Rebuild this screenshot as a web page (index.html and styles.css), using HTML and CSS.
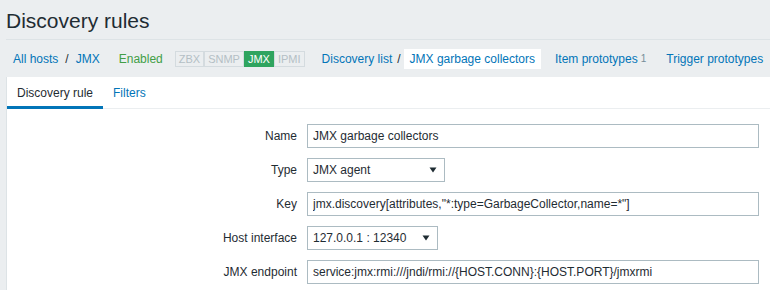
FILE: index.html
```html
<!DOCTYPE html>
<html>
<head>
    <title>Discovery rules</title>
    <link rel="stylesheet" href="styles.css">
</head>
<body>
    <div class="header">
        <h1>Discovery rules</h1>
    </div>
    <!-- host navigation -->
    <ul class="nav">
        <li class="crumbs">
            <a href="#">All hosts</a><span class="sep">/</span><a href="#">JMX</a>
        </li>
        <li class="enabled">Enabled</li>
        <li class="status">
            <span>ZBX</span><span>SNMP</span><span class="on">JMX</span><span>IPMI</span>
        </li>
        <li class="crumbs rule">
            <a href="#">Discovery list</a><span class="sep">/</span><a href="#" class="selected">JMX garbage collectors</a>
        </li>
        <li class="proto"><a href="#">Item prototypes</a> <sup>1</sup></li>
        <li class="trig"><a href="#">Trigger prototypes</a></li>
    </ul>
    <div class="panel">
        <ul class="tabs">
            <li class="active">Discovery rule</li>
            <li><a href="#">Filters</a></li>
        </ul>
        <div class="form">
            <label>Name</label>
            <div class="field"><input type="text" class="wide" value="JMX garbage collectors"></div>

            <label>Type</label>
            <div class="field">
                <div class="select type">
                    <span>JMX agent</span>
                    <svg width="8" height="6" viewBox="0 0 8 6"><path d="M0.5 0.5 H7.5 L4 5.5 Z" fill="#1f2c33"/></svg>
                </div>
            </div>

            <label>Key</label>
            <div class="field"><input type="text" class="wide" value='jmx.discovery[attributes,"*:type=GarbageCollector,name=*"]'></div>

            <label>Host interface</label>
            <div class="field">
                <div class="select iface">
                    <span>127.0.0.1 : 12340</span>
                    <svg width="8" height="6" viewBox="0 0 8 6"><path d="M0.5 0.5 H7.5 L4 5.5 Z" fill="#1f2c33"/></svg>
                </div>
            </div>

            <label>JMX endpoint</label>
            <div class="field"><input type="text" class="wide" value="service:jmx:rmi:///jndi/rmi://{HOST.CONN}:{HOST.PORT}/jmxrmi"></div>
        </div>
    </div>
</body>
</html>
```

FILE: styles.css
```css
body {
    margin: 0;
    background-color: #ebeef0;
    font-family: Arial, "Liberation Sans", sans-serif;
    font-size: 12px;
    color: #1f2c33;
    overflow: hidden;
}
a {
    color: #0275b8;
    text-decoration: none;
}
.header {
    margin-left: 6px;
    padding: 9px 0 6px 0;
    border-bottom: 1px solid #dde3e6;
}
h1 {
    margin: 0;
    font-size: 21px;
    font-weight: normal;
    line-height: 24px;
}
.nav {
    display: flex;
    align-items: center;
    height: 37px;
    margin: 0;
    padding: 0 0 0 13px;
    list-style: none;
    white-space: nowrap;
}
.nav li {
    display: flex;
    align-items: center;
}
.sep {
    margin: 0 7px;
    color: #1f2c33;
}
.enabled {
    margin-left: 19px;
    color: #429e47;
}
.status {
    margin-left: 12px;
    font-size: 11px;
}
.status span {
    line-height: 14px;
    padding: 0 3px;
    border: 1px solid #d4dbdf;
    color: #b4bfc5;
}
.status span.on {
    background-color: #2fa45f;
    border-color: #2fa45f;
    color: #fff;
}
.rule {
    margin-left: 17px;
}
.rule .sep {
    margin: 0 3px 0 5px;
}
.selected {
    display: block;
    line-height: 20px;
    padding: 0 6px;
    background-color: #fff;
}
.proto {
    margin-left: 14px;
}
.proto sup {
    margin-left: 3px;
    vertical-align: baseline;
    color: #768d99;
}
.trig {
    margin-left: 20px;
}
.panel {
    margin-left: 6px;
    height: 213px;
    background-color: #fff;
    border-left: 1px solid #dde3e6;
}
.tabs {
    display: flex;
    margin: 0;
    padding: 0;
    list-style: none;
    border-bottom: 1px solid #ebeef0;
}
.tabs li {
    padding: 9px 10px 6px 10px;
    line-height: 14px;
    border-bottom: 3px solid transparent;
    margin-bottom: -1px;
}
.tabs li.active {
    border-bottom-color: #0275b8;
}
.form {
    display: grid;
    grid-template-columns: 290px 1fr;
    column-gap: 10px;
    row-gap: 10px;
    padding-top: 15px;
}
.form label {
    text-align: right;
    line-height: 24px;
}
.field {
    display: flex;
    align-items: center;
}
input[type="text"] {
    box-sizing: border-box;
    height: 24px;
    margin: 0;
    padding: 0 5px;
    border: 1px solid #acbbc2;
    font-family: Arial, "Liberation Sans", sans-serif;
    font-size: 12px;
    color: #1f2c33;
    outline: none;
}
input.wide {
    width: 452px;
}
.select {
    box-sizing: border-box;
    display: flex;
    align-items: center;
    justify-content: space-between;
    height: 24px;
    padding: 0 7px 0 5px;
    border: 1px solid #acbbc2;
}
.select.type {
    width: 138px;
}
.select.iface {
    width: 131px;
}
```
